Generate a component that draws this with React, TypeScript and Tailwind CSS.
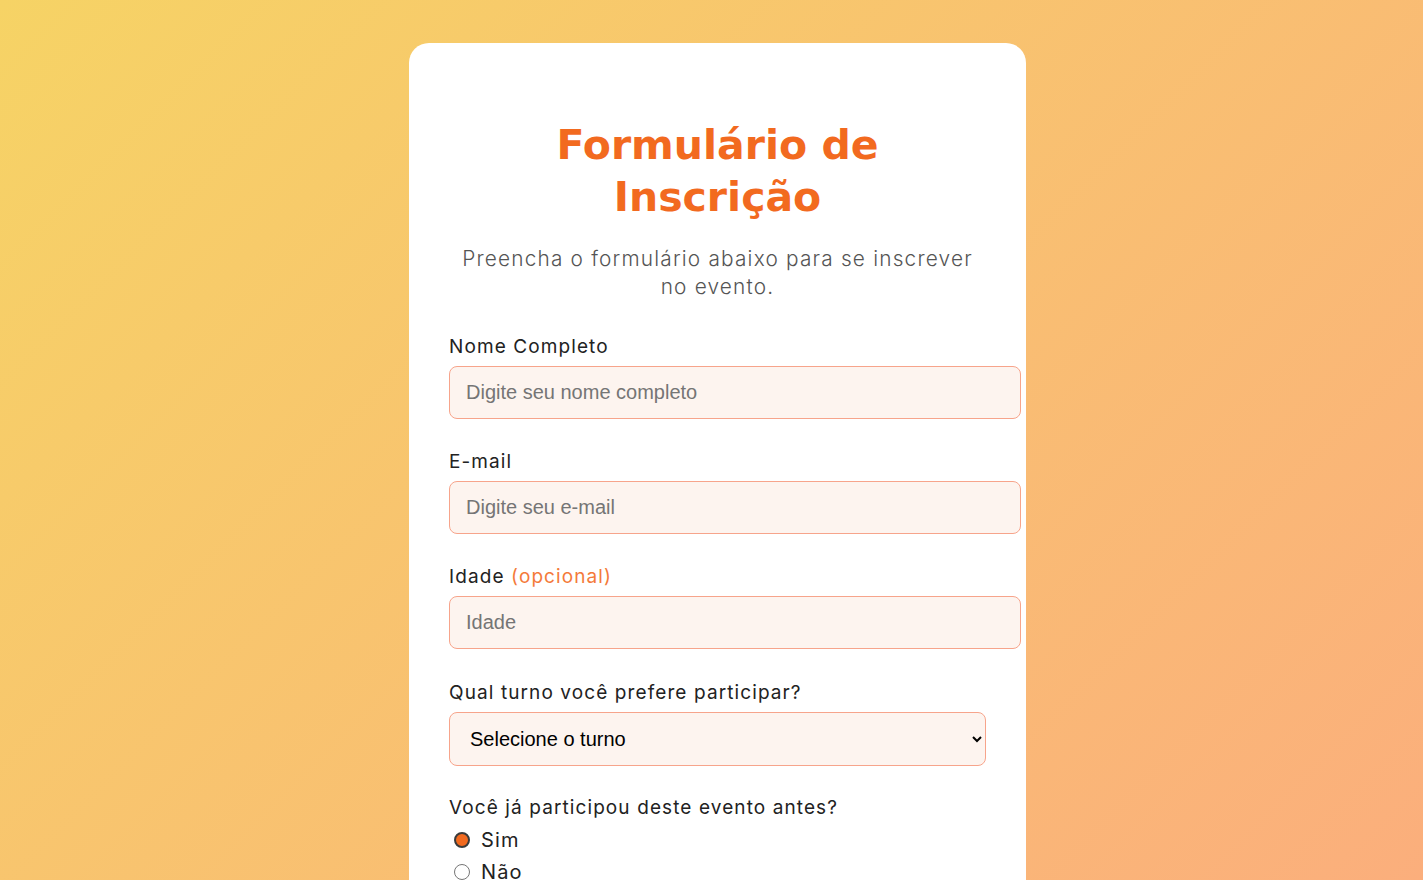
import { useState } from 'react'

const font = { fontFamily: 'Inter, "Noto Sans", sans-serif' }
const inputFont = { fontFamily: '"Liberation Sans", Arial, sans-serif' }

export default function App() {
  const [participou, setParticipou] = useState('sim')

  return (
    <div
      className="min-h-[1776px] w-full bg-[linear-gradient(135deg,#f6d365,#fda085)] flex justify-center pt-[43px] pl-3"
      style={font}
    >
      <div className="w-[617px] h-fit bg-white rounded-[20px] px-10 pt-[76px] pb-12">
        <h1
          className="text-center text-[41px] leading-[52px] font-bold text-[#f26a1f] px-[80px]"
          style={{ fontFamily: '"DejaVu Sans", Inter, sans-serif' }}
        >
          Formulário de Inscrição
        </h1>
        <p className="mt-[22px] mx-auto max-w-[525px] text-center text-[20.8px] leading-[28px] font-light tracking-[1.2px] text-[#555]">
          Preencha o formulário abaixo para se inscrever no evento.
        </p>

        <form className="mt-[34px]" onSubmit={(e) => e.preventDefault()}>
          {/* campos de texto */}
          <Field label="Nome Completo" placeholder="Digite seu nome completo" type="text" />
          <Field label="E-mail" placeholder="Digite seu e-mail" type="email" />
          <Field label="Idade" extra="(opcional)" placeholder="Idade" type="number" last />

          <div className="mb-[30px]">
            <label className="block text-[19px] leading-6 tracking-[1.1px] text-[#222] mb-[7px]">
              Qual turno você prefere participar?
            </label>
            <select
              defaultValue=""
              className="w-full h-[54px] px-4 rounded-lg border border-[#f7a48b] bg-[#fdf4ef] text-[20px] text-black outline-none"
              style={inputFont}
            >
              <option value="" disabled>
                Selecione o turno
              </option>
              <option value="manha">Manhã</option>
              <option value="tarde">Tarde</option>
              <option value="noite">Noite</option>
            </select>
          </div>

          <div className="mb-[30px]">
            <p className="text-[19px] leading-6 tracking-[1.1px] text-[#222]">
              Você já participou deste evento antes?
            </p>
            <div className="mt-[9px] flex flex-col gap-[10px]">
              {[
                { v: 'sim', t: 'Sim' },
                { v: 'nao', t: 'Não' },
              ].map((o) => (
                <label
                  key={o.v}
                  className="flex items-center gap-[11px] pl-[5px] text-[20px] leading-[22px] tracking-[1.1px] text-[#222] cursor-pointer"
                >
                  <input
                    type="radio"
                    name="participou"
                    checked={participou === o.v}
                    onChange={() => setParticipou(o.v)}
                    className="appearance-none w-4 h-4 rounded-full border border-[#767676] bg-white checked:border-2 checked:border-[#3b3b3b] checked:bg-[#f26a1f]"
                  />
                  {o.t}
                </label>
              ))}
            </div>
          </div>

          <div className="mb-[30px]">
            <label className="block text-[19px] leading-6 tracking-[1.1px] text-[#222] mb-[7px]">
              Como ficou sabendo do evento?
            </label>
            <textarea
              rows={4}
              placeholder="Conte para nós"
              className="box-content w-[538px] px-4 py-[14px] rounded-lg border border-[#f7a48b] bg-[#fdf4ef] text-[20px] placeholder:text-[#757575] outline-none resize-none"
              style={inputFont}
            />
          </div>

          <button
            type="submit"
            className="w-full h-[54px] rounded-lg bg-[#f26a1f] text-white text-[20px] font-semibold"
          >
            Enviar Inscrição
          </button>
        </form>
      </div>
    </div>
  )
}

function Field({
  label,
  extra,
  placeholder,
  type,
  last,
}: {
  label: string
  extra?: string
  placeholder: string
  type: string
  last?: boolean
}) {
  return (
    <div className={last ? 'mb-[32px]' : 'mb-[31px]'}>
      <label className="block text-[19px] leading-6 tracking-[1.1px] text-[#222] mb-[7px]">
        {label} {extra && <span className="text-[#f47a3a]">{extra}</span>}
      </label>
      <input
        type={type}
        placeholder={placeholder}
        className="box-content w-[538px] h-[23px] px-4 py-[14px] rounded-lg border border-[#f7a48b] bg-[#fdf4ef] text-[20px] leading-[23px] placeholder:text-[#757575] outline-none"
        style={inputFont}
      />
    </div>
  )
}
